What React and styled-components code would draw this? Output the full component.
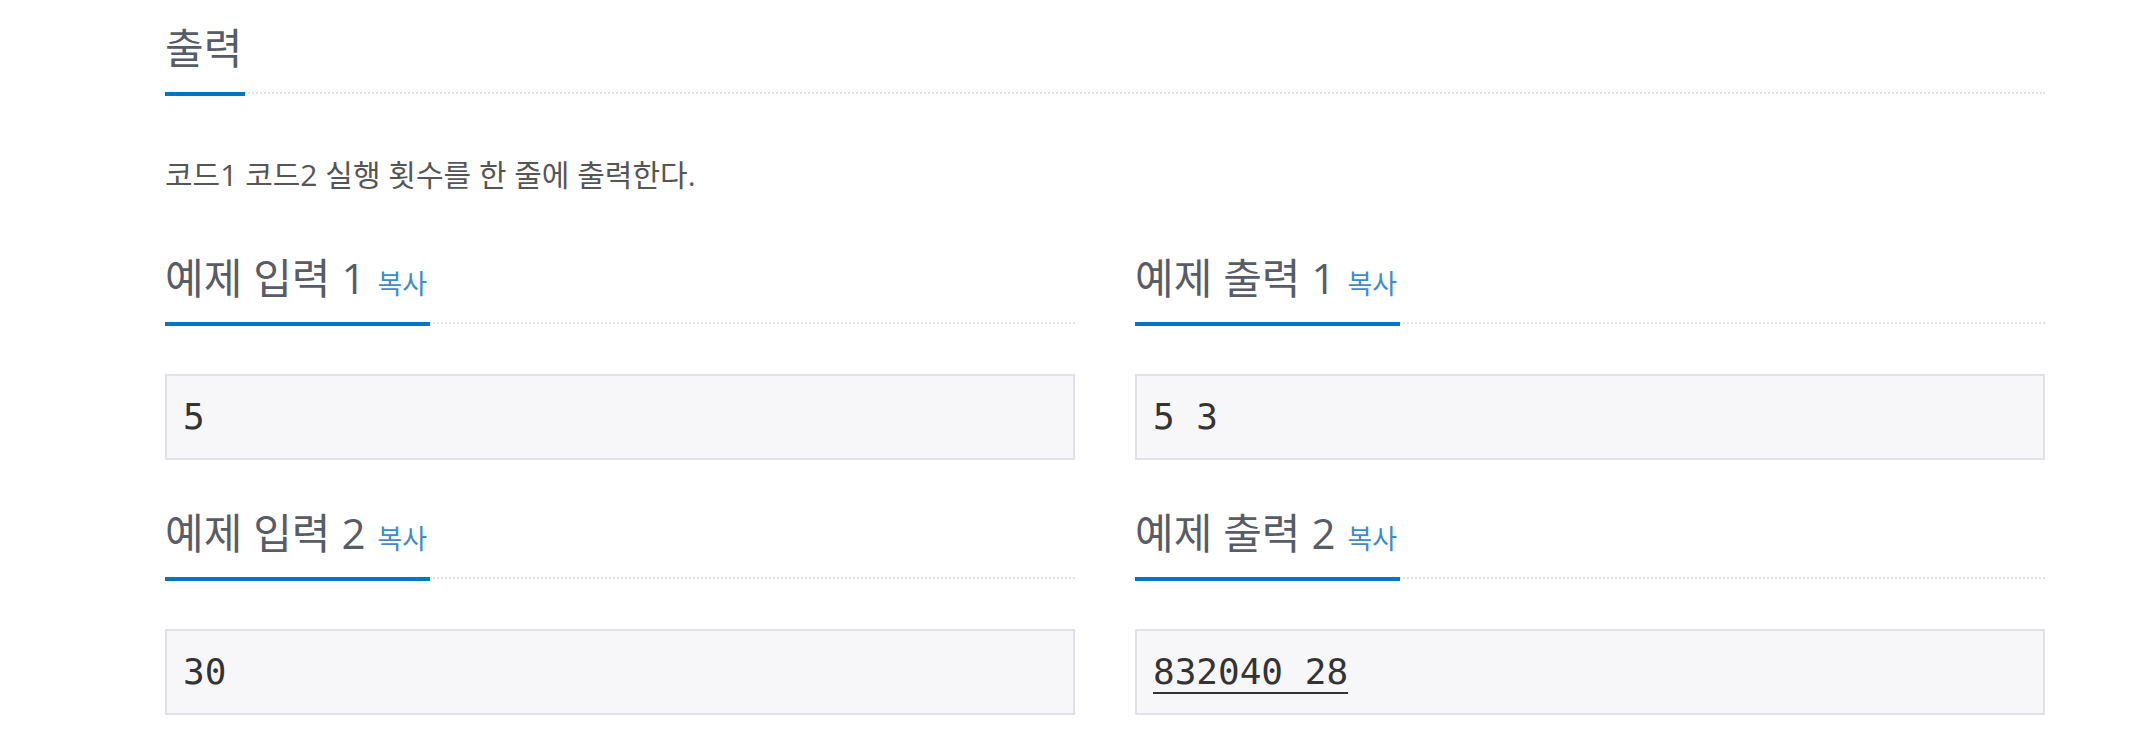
import React from 'react';
import styled, { createGlobalStyle } from 'styled-components';

const GlobalStyle = createGlobalStyle`
    body {
        margin: 0;
        background: #ffffff;
        font-family: "Open Sans", "Noto Sans CJK KR", sans-serif;
    }
`;

const Page = styled.div`
    width: 1880px;
    margin-left: 165px;
    padding-top: 24px;
`;

const Section = styled.section`
    display: flex;
    flex-direction: column;
`;

const Headline = styled.div`
    display: flex;
    align-items: flex-end;
    border-bottom: 2px dotted #e2e3e8;
`;

const Title = styled.h2`
    margin: 0 0 -4px 0;
    padding: 0 3px 20px 0;
    font-size: 42px;
    line-height: 48px;
    font-weight: 400;
    color: #575c66;
    border-bottom: 4px solid #0076c0;
`;

const CopyButton = styled.button`
    margin-left: 12px;
    padding: 0;
    border: none;
    background: none;
    font-family: inherit;
    font-size: 27px;
    color: #428bca;
    cursor: pointer;
`;

const Description = styled.p`
    margin: 61px 0 0 0;
    font-size: 30px;
    line-height: 40px;
    color: #555555;
`;

const SampleGrid = styled.div`
    display: grid;
    grid-template-columns: 1fr 1fr;
    column-gap: 60px;
    margin-top: 59px;
`;

const Column = styled.div`
    display: flex;
    flex-direction: column;
    margin-bottom: 49px;
`;

const SampleBox = styled.pre`
    margin: 50px 0 0 0;
    padding: 15px 16px 16px;
    border: 2px solid #e1e1e8;
    background: #f7f7f9;
    font-family: "DejaVu Sans Mono", "Liberation Mono", monospace;
    font-size: 36px;
    line-height: 51px;
    color: #333333;
`;

const SampleText = styled.span`
    text-decoration: ${(p) => (p.$marked ? 'underline' : 'none')};
    text-decoration-thickness: 2px;
    text-underline-offset: 8px;
`;

const samples = [
    { label: '예제 입력 1', value: '5' },
    { label: '예제 출력 1', value: '5 3' },
    { label: '예제 입력 2', value: '30' },
    { label: '예제 출력 2', value: '832040 28', marked: true },
];

function App() {
    return (
        <>
            <GlobalStyle />
            <Page>
                <Section>
                    <Headline>
                        <Title>출력</Title>
                    </Headline>
                    <Description>코드1 코드2 실행 횟수를 한 줄에 출력한다.</Description>
                </Section>

                <SampleGrid>
                    {samples.map((s) => (
                        <Column key={s.label}>
                            <Headline>
                                <Title>
                                    {s.label}
                                    <CopyButton>복사</CopyButton>
                                </Title>
                            </Headline>
                            <SampleBox>
                                <SampleText $marked={s.marked}>{s.value}</SampleText>
                            </SampleBox>
                        </Column>
                    ))}
                </SampleGrid>
            </Page>
        </>
    );
}

export default App;
